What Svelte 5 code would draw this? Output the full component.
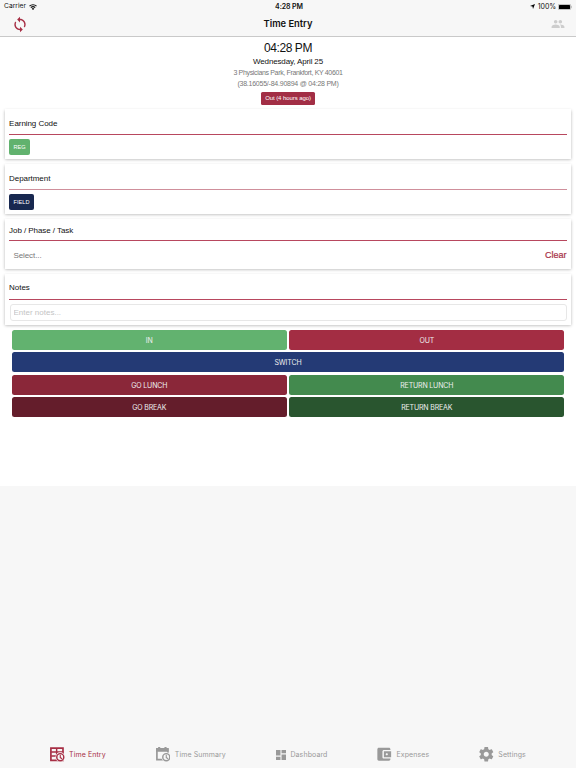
<script lang="ts">
    let notes = '';

    const actions = [
        { label: 'IN', kind: 'in' },
        { label: 'OUT', kind: 'out' },
        { label: 'SWITCH', kind: 'switch' },
        { label: 'GO LUNCH', kind: 'go-lunch' },
        { label: 'RETURN LUNCH', kind: 'return-lunch' },
        { label: 'GO BREAK', kind: 'go-break' },
        { label: 'RETURN BREAK', kind: 'return-break' },
    ];
</script>

<div class="screen">
    <header>
        <div class="status">
            <div class="status-left">
                <span class="carrier">Carrier</span>
                <svg class="wifi" viewBox="0 0 24 18" fill="none" stroke="#111" stroke-width="3.6">
                    <path d="M1.5 6.5a15 15 0 0 1 21 0M5.5 11a9.5 9.5 0 0 1 13 0" />
                    <path d="M12 18l-4-4a6 6 0 0 1 8 0z" fill="#111" stroke="none" />
                </svg>
            </div>
            <span class="clock">4:28 PM</span>
            <div class="status-right">
                <svg class="location" viewBox="0 0 10 10"><path d="M10 0L6 10L5 5L0 4z" /></svg>
                <span class="percent">100%</span>
                <svg class="battery" viewBox="0 0 28 12">
                    <rect x=".6" y=".6" width="24.8" height="10.8" rx="2.5" fill="none" stroke="#777" stroke-width="1" />
                    <rect x="2" y="2" width="22" height="8" rx="1" />
                    <path d="M26.5 4q2 2 0 4z" fill="#777" />
                </svg>
            </div>
        </div>
        <div class="nav">
            <button class="icon-button" aria-label="Refresh">
                <svg class="refresh" viewBox="0 0 24 24" fill="#a72f45">
                    <path d="M12 4V1L8 5l4 4V6c3.31 0 6 2.69 6 6 0 1.01-.25 1.97-.7 2.8l1.46 1.46C19.54 15.03 20 13.57 20 12c0-4.42-3.58-8-8-8zm0 14c-3.31 0-6-2.69-6-6 0-1.01.25-1.97.7-2.8L5.24 7.74C4.46 8.97 4 10.43 4 12c0 4.42 3.58 8 8 8v3l4-4-4-4v3z" />
                </svg>
            </button>
            <h1>Time Entry</h1>
            <button class="icon-button" aria-label="Employees">
                <svg class="people" viewBox="0 0 24 24" fill="#cdcdcd">
                    <path d="M16 11c1.66 0 2.99-1.34 2.99-3S17.66 5 16 5s-3 1.34-3 3 1.34 3 3 3zm-8 0c1.66 0 2.99-1.34 2.99-3S9.66 5 8 5 5 6.34 5 8s1.34 3 3 3zm0 2c-2.33 0-7 1.17-7 3.5V19h14v-2.5c0-2.33-4.67-3.5-7-3.5zm8 0c-.29 0-.62.02-.97.05 1.16.84 1.97 1.97 1.97 3.45V19h6v-2.5c0-2.33-4.67-3.5-7-3.5z" />
                </svg>
            </button>
        </div>
    </header>

    <main>
        <section class="summary">
            <div class="time">04:28 PM</div>
            <div class="date">Wednesday, April 25</div>
            <div class="address">3 Physicians Park, Frankfort, KY 40601</div>
            <div class="coords">(38.16055/-84.90894 @ 04:28 PM)</div>
            <span class="state">Out (4 hours ago)</span>
        </section>

        <div class="cards">
            <section class="card">
                <h2>Earning Code</h2>
                <button class="chip reg">REG</button>
            </section>
            <section class="card department">
                <h2>Department</h2>
                <button class="chip field">FIELD</button>
            </section>
            <section class="card job">
                <h2>Job / Phase / Task</h2>
                <div class="picker">
                    <span>Select...</span>
                    <button class="clear">Clear</button>
                </div>
            </section>
            <section class="card notes">
                <h2>Notes</h2>
                <input bind:value={notes} placeholder="Enter notes..." />
            </section>
        </div>

        <div class="actions">
            {#each actions as action}
                <button class={action.kind}>{action.label}</button>
            {/each}
        </div>
    </main>

    <nav class="tabs">
        <button class="tab active">
            <svg viewBox="0 0 24 24" class="icon">
                <path d="M1.5 2h20v20h-20z" fill="none" stroke="currentColor" stroke-width="2.8" />
                <path d="M2 8.2h20M2 15h12M11 2v20" fill="none" stroke="currentColor" stroke-width="2.4" />
                <circle cx="17" cy="16.8" r="8" fill="#f7f7f7" />
                <circle cx="17" cy="16.8" r="5.8" fill="none" stroke="currentColor" stroke-width="2.4" />
                <path d="M17 13v4.5l3 1.8" fill="none" stroke="currentColor" stroke-width="1.8" />
            </svg>
            <span>Time Entry</span>
        </button>
        <button class="tab">
            <svg viewBox="0 0 24 24" class="icon">
                <path d="M1.5 3h18v18h-18z" fill="none" stroke="currentColor" stroke-width="2.8" />
                <path d="M0 2h21v6H0zM3.5 0h3.5v3H3.5zM14 0h3.5v3H14z" fill="currentColor" />
                <circle cx="17" cy="16.8" r="8" fill="#f7f7f7" />
                <circle cx="17" cy="16.8" r="5.8" fill="none" stroke="currentColor" stroke-width="2.4" />
                <path d="M17 13v4.5l3 1.8" fill="none" stroke="currentColor" stroke-width="1.8" />
            </svg>
            <span>Time Summary</span>
        </button>
        <button class="tab">
            <svg viewBox="3 3 18 18" class="icon small" fill="currentColor">
                <path d="M3 13h8V3H3v10zm0 8h8v-6H3v6zm10 0h8V11h-8v10zm0-18v6h8V3h-8z" />
            </svg>
            <span>Dashboard</span>
        </button>
        <button class="tab">
            <svg viewBox="2.5 2 20 20" class="icon" fill="currentColor">
                <path d="M21 18v1c0 1.1-.9 2-2 2H5c-1.11 0-2-.9-2-2V5c0-1.1.89-2 2-2h14c1.1 0 2 .9 2 2v1h-9c-1.11 0-2 .9-2 2v8c0 1.1.89 2 2 2h9zm-9-2h10V8H12v8zm4-2.5c-.83 0-1.5-.67-1.5-1.5s.67-1.5 1.5-1.5 1.5.67 1.5 1.5-.67 1.5-1.5 1.5z" />
            </svg>
            <span>Expenses</span>
        </button>
        <button class="tab">
            <svg viewBox="2 2 20 20" class="icon" fill="currentColor">
                <path d="M19.43 12.98c.04-.32.07-.64.07-.98s-.03-.66-.07-.98l2.11-1.65c.19-.15.24-.42.12-.64l-2-3.46c-.12-.22-.39-.3-.61-.22l-2.49 1c-.52-.4-1.08-.73-1.69-.98l-.38-2.65C14.46 2.18 14.25 2 14 2h-4c-.25 0-.46.18-.49.42l-.38 2.65c-.61.25-1.17.59-1.69.98l-2.49-1c-.23-.09-.49 0-.61.22l-2 3.46c-.13.22-.07.49.12.64l2.11 1.65c-.04.32-.07.65-.07.98s.03.66.07.98l-2.11 1.65c-.19.15-.24.42-.12.64l2 3.46c.12.22.39.3.61.22l2.49-1c.52.4 1.08.73 1.69.98l.38 2.65c.03.24.24.42.49.42h4c.25 0 .46-.18.49-.42l.38-2.65c.61-.25 1.17-.59 1.69-.98l2.49 1c.23.09.49 0 .61-.22l2-3.46c.12-.22.07-.49-.12-.64l-2.11-1.65zM12 15.5c-1.93 0-3.5-1.57-3.5-3.5s1.57-3.5 3.5-3.5 3.5 1.57 3.5 3.5-1.57 3.5-3.5 3.5z" />
            </svg>
            <span>Settings</span>
        </button>
    </nav>
</div>

<style>
    .screen {
        display: flex;
        flex-direction: column;
        height: 768px;
        background: #f7f7f7;
        color: #111;
        font-family: "Liberation Sans", Arial, sans-serif;
        overflow: hidden;
    }

    button {
        display: block;
        margin: 0;
        padding: 0;
        border: none;
        background: none;
        font: inherit;
        white-space: nowrap;
    }

    svg {
        display: block;
        flex: none;
    }

    header {
        box-sizing: border-box;
        height: 37px;
        border-bottom: 1px solid #c9c9c9;
    }

    .status {
        display: grid;
        grid-template-columns: 1fr auto 1fr;
        align-items: center;
        height: 12px;
        padding: 0 4px;
        font: 6.7px/13px Inter, sans-serif;
    }

    .status-left, .status-right {
        display: flex;
        align-items: center;
    }

    .status-left {
        gap: 3px;
    }

    .status-right {
        justify-content: flex-end;
    }

    .wifi {
        width: 8px;
        height: 6px;
    }

    .clock {
        font-weight: 600;
        font-size: 7px;
        letter-spacing: -0.1px;
        padding-left: 2px;
    }

    .location {
        width: 5px;
        height: 5px;
        margin-right: 3px;
    }

    .percent {
        font-size: 7px;
        letter-spacing: -0.1px;
        margin-right: 2px;
    }

    .battery {
        width: 14px;
        height: 6px;
    }

    .nav {
        display: flex;
        align-items: center;
        justify-content: space-between;
        height: 24px;
        padding: 0 11px;
    }

    .refresh {
        width: 18px;
        height: 17px;
    }

    .people {
        width: 14px;
        height: 14px;
    }

    h1 {
        margin: 0;
        padding-right: 4px;
        font: 600 9.4px/24px Inter, sans-serif;
        letter-spacing: -0.03px;
    }

    main {
        display: flex;
        flex-direction: column;
        height: 449px;
        background: #fff;
    }

    .summary {
        display: flex;
        flex-direction: column;
        align-items: center;
        height: 68px;
        padding-top: 4px;
    }

    .time {
        font-size: 12px;
        line-height: 14px;
        letter-spacing: -0.4px;
    }

    .date {
        font-size: 8px;
        line-height: 13px;
        letter-spacing: -0.14px;
    }

    .address, .coords {
        color: #777;
        font-size: 7px;
        line-height: 10.5px;
        letter-spacing: -0.34px;
    }

    .coords {
        letter-spacing: -0.23px;
    }

    .state {
        box-sizing: border-box;
        width: 54px;
        height: 13px;
        margin-top: 3px;
        border-radius: 1.5px;
        background: #a22e45;
        color: #fff;
        font-size: 6px;
        line-height: 13px;
        letter-spacing: -0.08px;
        text-align: center;
    }

    .cards {
        display: flex;
        flex-direction: column;
        gap: 5px;
        padding: 0 5px;
    }

    .card {
        box-sizing: border-box;
        height: 50px;
        padding: 0 4.5px;
        background: #fff;
        box-shadow: 0 0.5px 3px rgba(0, 0, 0, 0.3);
    }

    .card.notes {
        height: 51px;
    }

    h2 {
        box-sizing: border-box;
        height: 26px;
        margin: 0 0 4px -0.4px;
        padding-top: 5px;
        border-bottom: 1px solid #b8485e;
        font-size: 8px;
        font-weight: 400;
        line-height: 20px;
        letter-spacing: -0.06px;
    }

    .department h2 {
        border-color: #cf8f9b;
    }

    .job h2 {
        height: 22px;
        margin-bottom: 0;
        padding-top: 2px;
    }

    .notes h2 {
        padding-top: 4px;
    }

    .chip {
        height: 16px;
        margin-left: -0.5px;
        border-radius: 2px;
        color: #fff;
        font-size: 5.6px;
        line-height: 17px;
    }

    .reg {
        width: 21px;
        background: #61b26e;
    }

    .field {
        width: 25px;
        background: #182850;
    }

    .picker {
        display: flex;
        align-items: center;
        justify-content: space-between;
        height: 28px;
        padding-left: 4px;
        color: #777;
        font-size: 8px;
        letter-spacing: -0.1px;
    }

    .clear {
        color: #a72f45;
        font-size: 9px;
        letter-spacing: 0;
        -webkit-text-stroke: 0.2px currentColor;
    }

    input {
        display: block;
        box-sizing: border-box;
        width: 100%;
        height: 17px;
        padding: 0 3px;
        border: 1px solid #e7e7e7;
        border-radius: 3px;
        background: #fff;
        color: #333;
        font: 8px "Liberation Sans", Arial, sans-serif;
    }

    input::placeholder {
        color: #c4c4c4;
    }

    .actions {
        display: grid;
        grid-template-columns: 1fr 1fr;
        gap: 2.4px;
        padding: 5px 11.7px 0;
    }

    .actions button {
        height: 20px;
        border-radius: 2.5px;
        color: #eee;
        font: 7px/21.5px Inter, sans-serif;
        letter-spacing: -0.16px;
    }

    .actions .switch {
        grid-column: span 2;
        background: #243a75;
    }

    .actions .in {
        background: #62b26f;
    }

    .actions .out {
        background: #a32d43;
    }

    .actions .go-lunch {
        background: #8a2739;
    }

    .actions .return-lunch {
        background: #438a4e;
    }

    .actions .go-break {
        background: #641d2b;
    }

    .actions .return-break {
        background: #29552f;
    }

    .tabs {
        display: flex;
        justify-content: space-evenly;
        height: 27px;
        margin-top: auto;
    }

    .tab {
        display: flex;
        align-items: center;
        gap: 4.5px;
        color: #999;
        font: 7px/27px Inter, sans-serif;
        letter-spacing: 0.1px;
    }

    .tab.active {
        color: #a72f45;
    }

    .icon {
        width: 14.5px;
        height: 14.5px;
    }

    .icon.small {
        width: 10px;
        height: 10px;
    }
</style>
